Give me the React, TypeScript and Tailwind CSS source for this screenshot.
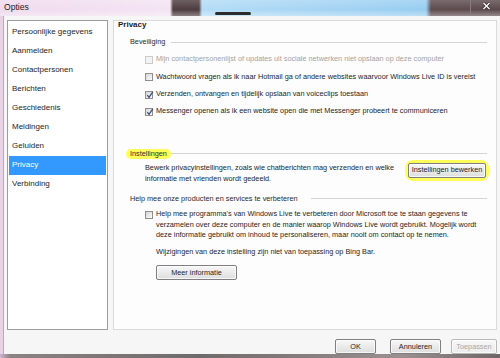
import React from "react";

function Checkbox({ checked = false, disabled = false }: { checked?: boolean; disabled?: boolean }) {
  return (
    <span
      className={
        disabled
          ? "relative block w-[8px] h-[8px] shrink-0 border border-[#c9c9c9] bg-[#f3f3f3]"
          : "relative block w-[8px] h-[8px] shrink-0 border border-[#8e8f8f] bg-[linear-gradient(135deg,#d6d6d6,#fbfbfb)]"
      }
    >
      {checked && (
        <svg className="absolute left-[0px] top-[-1px]" width="8" height="8" viewBox="0 0 8 8">
          <path d="M1.3 4.2 L3 6.4 L6.8 0.8" fill="none" stroke="#3d4f86" strokeWidth="1.3" />
        </svg>
      )}
    </span>
  );
}

function Btn({ children, w, disabled = false }: { children: React.ReactNode; w: string; disabled?: boolean }) {
  return (
    <div
      className={
        (disabled
          ? "border-[#b8b8b8] text-[#a8a8a8] bg-[linear-gradient(#f7f7f7,#ececec)] "
          : "border-[#7f7f7f] text-[#1e1e1e] bg-[linear-gradient(#f7f7f7,#dedede)] ") +
        "h-[15px] flex items-center justify-center border rounded-[2px] text-[7.3px] leading-none shadow-[inset_0_0_0_1px_rgba(255,255,255,0.7)] " +
        w
      }
    >
      {children}
    </div>
  );
}

function GroupHeader({
  children,
  highlight = false,
  gap = "ml-[6px]",
}: {
  children: React.ReactNode;
  highlight?: boolean;
  gap?: string;
}) {
  return (
    <div className="flex items-center h-[10px] ml-[16px] mr-[9px]">
      <span
        className={
          highlight
            ? "relative text-[7.3px] leading-[10px] text-[#2b2b2b] px-[4px] -mx-[4px] rounded-[5px] bg-[#ffff5a]"
            : "text-[7.3px] leading-[10px] text-[#2b2b2b]"
        }
      >
        {children}
      </span>
      <span className={"flex-1 h-[1px] bg-[#d4d4d4] " + gap} />
    </div>
  );
}

export default function App() {
  const items = [
    "Persoonlijke gegevens",
    "Aanmelden",
    "Contactpersonen",
    "Berichten",
    "Geschiedenis",
    "Meldingen",
    "Geluiden",
    "Privacy",
    "Verbinding",
  ];
  return (
    <div className="w-[500px] h-[358px] overflow-hidden flex flex-col bg-[#e7d2e6] font-['Liberation_Sans',Arial,sans-serif]">
      {/* title bar */}
      <div className="relative h-[16px] shrink-0 bg-[linear-gradient(to_right,#efdaee_0px,#f4e4f3_170px,#4d3c40_173px,#4d3c40_199px,#b3dcf6_202px,#98cdf1_426px,#5e4b4e_431px,#5b4a4c_500px)]">
        <div className="absolute inset-0 bg-[linear-gradient(to_bottom,rgba(255,255,255,0.18),rgba(255,255,255,0)_60%,rgba(255,255,255,0.35))]" />
        <div className="absolute left-[215px] top-[12px] w-[36px] h-[3px] rounded-full bg-[#2c2c2c] blur-[0.6px]" />
        <div className="absolute left-[470px] top-0 w-[1px] h-[14px] bg-[#8b7b7c]" />
        <svg className="absolute left-[482px] top-[2px]" width="9" height="8" viewBox="0 0 9 8">
          <path d="M1.5 1 L7.5 7 M7.5 1 L1.5 7" stroke="#3a2c2e" strokeWidth="2.6" />
          <path d="M1.5 1 L7.5 7 M7.5 1 L1.5 7" stroke="#ffffff" strokeWidth="1.3" />
        </svg>
        <span className="relative block pl-[4px] pt-[2px] text-[8.6px] leading-[10px] text-[#1b1b1b]">Opties</span>
      </div>

      {/* body */}
      <div className="flex-1 flex flex-col ml-[3px] border-l border-[#bda9bc] bg-[#f6f6f6] pt-[4px] pl-[3px] pr-[3px] text-[#1e1e1e]">
        <div className="h-[310px] flex gap-[5px]">
          {/* left list */}
          <div className="w-[101px] shrink-0 border border-[#9d9d9d] bg-white pt-[1.5px] pl-[1px] pr-[1px]">
            {items.map((it) => (
              <div
                key={it}
                className={
                  it === "Privacy"
                    ? "h-[19px] flex items-center pl-[3px] bg-[#3399ff] text-white text-[8px]"
                    : "h-[19px] flex items-center pl-[3px] text-[#1e1e1e] text-[8px]"
                }
              >
                {it}
              </div>
            ))}
          </div>

          {/* right panel */}
          <div className="flex-1 border border-[#dadada] bg-[#fdfdfd] flex flex-col">
            <div className="pl-[4px] text-[8px] leading-[8px] font-bold text-[#1e1e1e]">Privacy</div>

            <div className="mt-[8px]">
              <GroupHeader>Beveiliging</GroupHeader>
            </div>

            <div className="mt-[4.3px] ml-[31px] flex flex-col text-[7.3px]">
              {[
                { t: "Mijn contactpersonenlijst of updates uit sociale netwerken niet opslaan op deze computer", c: false, d: true },
                { t: "Wachtwoord vragen als ik naar Hotmail ga of andere websites waarvoor Windows Live ID is vereist", c: false, d: false },
                { t: "Verzenden, ontvangen en tijdelijk opslaan van voiceclips toestaan", c: true, d: false },
                { t: "Messenger openen als ik een website open die met Messenger probeert te communiceren", c: true, d: false },
              ].map((r) => (
                <div key={r.t} className="h-[17.33px] flex items-center gap-[3px]">
                  <Checkbox checked={r.c} disabled={r.d} />
                  <span className={r.d ? "text-[#a3a3a3] whitespace-nowrap" : "text-[#1e1e1e] whitespace-nowrap"}>{r.t}</span>
                </div>
              ))}
            </div>

            <div className="mt-[28px]">
              <GroupHeader highlight gap="ml-[4px]">Instellingen</GroupHeader>
            </div>

            <div className="mt-[3px] ml-[31px] mr-[7px] flex items-start justify-between">
              <div className="text-[7.3px] leading-[11px] text-[#1e1e1e] whitespace-nowrap">
                Bewerk privacyinstellingen, zoals wie chatberichten mag verzenden en welke
                <br />
                informatie met vrienden wordt gedeeld.
              </div>
              <div className="-mt-[2px] p-[3px] rounded-[8px] bg-[#ffff5a]">
                <Btn w="w-[78px]">Instellingen bewerken</Btn>
              </div>
            </div>

            <div className="mt-[10px]">
              <GroupHeader gap="ml-[13px]">Help mee onze producten en services te verbeteren</GroupHeader>
            </div>

            <div className="mt-[5.5px] ml-[31px] flex items-start gap-[3px]">
              <div className="mt-[1.5px]">
                <Checkbox />
              </div>
              <div className="text-[7.3px] leading-[10.5px] text-[#1e1e1e] whitespace-nowrap">
                Help mee programma's van Windows Live te verbeteren door Microsoft toe te staan gegevens te
                <br />
                verzamelen over deze computer en de manier waarop Windows Live wordt gebruikt. Mogelijk wordt
                <br />
                deze informatie gebruikt om inhoud te personaliseren, maar nooit om contact op te nemen.
              </div>
            </div>

            <div className="mt-[6.5px] ml-[42px] text-[7.3px] leading-[10.5px] text-[#1e1e1e]">
              Wijzigingen van deze instelling zijn niet van toepassing op Bing Bar.
            </div>

            <div className="mt-[7.5px] ml-[42px]">
              <Btn w="w-[81px]">Meer informatie</Btn>
            </div>
          </div>
        </div>

        {/* bottom buttons */}
        <div className="mt-[9px] flex justify-end pr-[0px]">
          <Btn w="w-[41px]">OK</Btn>
          <div className="w-[14px]" />
          <Btn w="w-[51px]">Annuleren</Btn>
          <div className="w-[10px]" />
          <Btn w="w-[46px]" disabled>
            Toepassen
          </Btn>
        </div>
      </div>
      <div className="h-[4px] shrink-0 bg-[linear-gradient(to_right,#cdb6cc_0px,#8a8384_10px,#6f6a6b_200px,#9a9090_400px,#6d6768_500px)]" />
    </div>
  );
}
